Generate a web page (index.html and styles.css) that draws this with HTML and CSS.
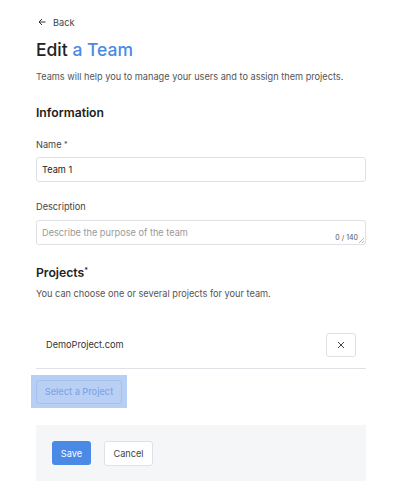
FILE: index.html
```html
<!DOCTYPE html>
<html>
<head>
<meta charset="utf-8">
<link rel="stylesheet" href="styles.css">
</head>
<body>
<div class="page">
  <a class="back"><svg width="8" height="8" viewBox="0 0 8 8"><path d="M7.5 4H1M4 1L1 4l3 3" fill="none" stroke="#333" stroke-width="1"/></svg><span>Back</span></a>
  <h1 class="title">Edit <span class="accent">a Team</span></h1>
  <p class="lead">Teams will help you to manage your users and to assign them projects.</p>

  <h2 class="section">Information</h2>
  <label class="label">Name <sup>*</sup></label>
  <div class="input">Team 1</div>
  <label class="label desc-label">Description</label>
  <div class="textarea"><span class="ph">Describe the purpose of the team</span><span class="count">0 / 140</span><svg class="grip" width="6" height="6" viewBox="0 0 6 6"><path d="M6 1L1 6M6 4L4 6" stroke="#999" stroke-width="0.7"/></svg></div>

  <h2 class="section projects">Projects<sup>*</sup></h2>
  <p class="hint">You can choose one or several projects for your team.</p>

  <div class="project-row">
    <span>DemoProject.com</span>
    <button class="remove"><svg width="8" height="8" viewBox="0 0 8 8"><path d="M1 1l6 6M7 1L1 7" stroke="#444" stroke-width="1"/></svg></button>
  </div>
  <div class="select-wrap"><button class="select">Select a Project</button></div>

  <div class="footer">
    <button class="save">Save</button>
    <button class="cancel">Cancel</button>
  </div>
</div>
</body>
</html>
```

FILE: styles.css
```css
* { box-sizing: border-box; }
body { margin: 0; background: #fff; font-family: "Inter", "Lato", sans-serif; color: #333; }
.page { padding: 15px 42px 0 36px; width: 408px; }
.back { display: flex; align-items: center; gap: 7px; font-size: 9.2px; color: #444; height: 14px; margin-left: 2px; }
.title { margin: 9px 0 0; font-size: 17.5px; font-weight: 500; color: #222; line-height: 24px; }
.accent { color: #4a8ae6; }
.lead { margin: 9px 0 0; font-size: 9.2px; color: #555; line-height: 12px; }
.section { margin: 22px 0 0; font-size: 12.2px; font-weight: 600; color: #222; line-height: 16px; }
.section sup { font-size: 7px; vertical-align: top; position: relative; top: -2px; }
.label { display: block; margin-top: 18px; font-size: 9.2px; color: #444; line-height: 12px; }
.label sup { font-size: 7px; vertical-align: top; }
.input { margin-top: 6px; height: 25px; border: 1px solid #dfe1e6; border-radius: 3px; font-size: 9.2px; color: #222; padding: 0 5px; display: flex; align-items: center; }
.desc-label { margin-top: 19px; }
.textarea { position: relative; margin-top: 7px; height: 25px; border: 1px solid #dfe1e6; border-radius: 3px; font-size: 9.2px; padding: 0 5px; display: flex; align-items: center; }
.ph { color: #999; }
.count { position: absolute; right: 7px; bottom: 2px; font-size: 7px; color: #555; }
.grip { position: absolute; right: 1px; bottom: 1px; }
.projects { margin-top: 20px; }
.hint { margin: 7px 0 0; font-size: 9.2px; color: #555; line-height: 12px; }
.project-row { margin-top: 25px; height: 44px; border-bottom: 1px solid #dfe1e6; display: flex; align-items: center; justify-content: space-between; padding: 0 10px 4px 10px; font-size: 9.2px; color: #333; }
.remove { width: 30px; height: 24px; border: 1px solid #dfe1e6; border-radius: 3px; background: #fff; display: flex; align-items: center; justify-content: center; padding: 0; }
.select-wrap { margin: 6px 0 0 -5px; width: 96px; height: 33px; background: #b7cff4; display: flex; align-items: center; justify-content: center; }
.select { width: 86px; height: 24px; border: 1px solid #a6c1ee; border-radius: 3px; background: #b9d0f4; color: #7fa6ea; font-family: inherit; font-size: 9.2px; font-weight: 500; padding: 0; }
.footer { margin-top: 17px; height: 56px; background: #f5f6f8; display: flex; align-items: center; gap: 13px; padding: 0 16px; }
.save { height: 24px; width: 39px; border: none; border-radius: 3px; background: #4a8ae6; color: #fff; font-family: inherit; font-size: 9.2px; padding: 0; }
.cancel { height: 25px; width: 49px; border: 1px solid #dfe1e6; border-radius: 3px; background: #fff; color: #444; font-family: inherit; font-size: 9.2px; padding: 0; }
```
